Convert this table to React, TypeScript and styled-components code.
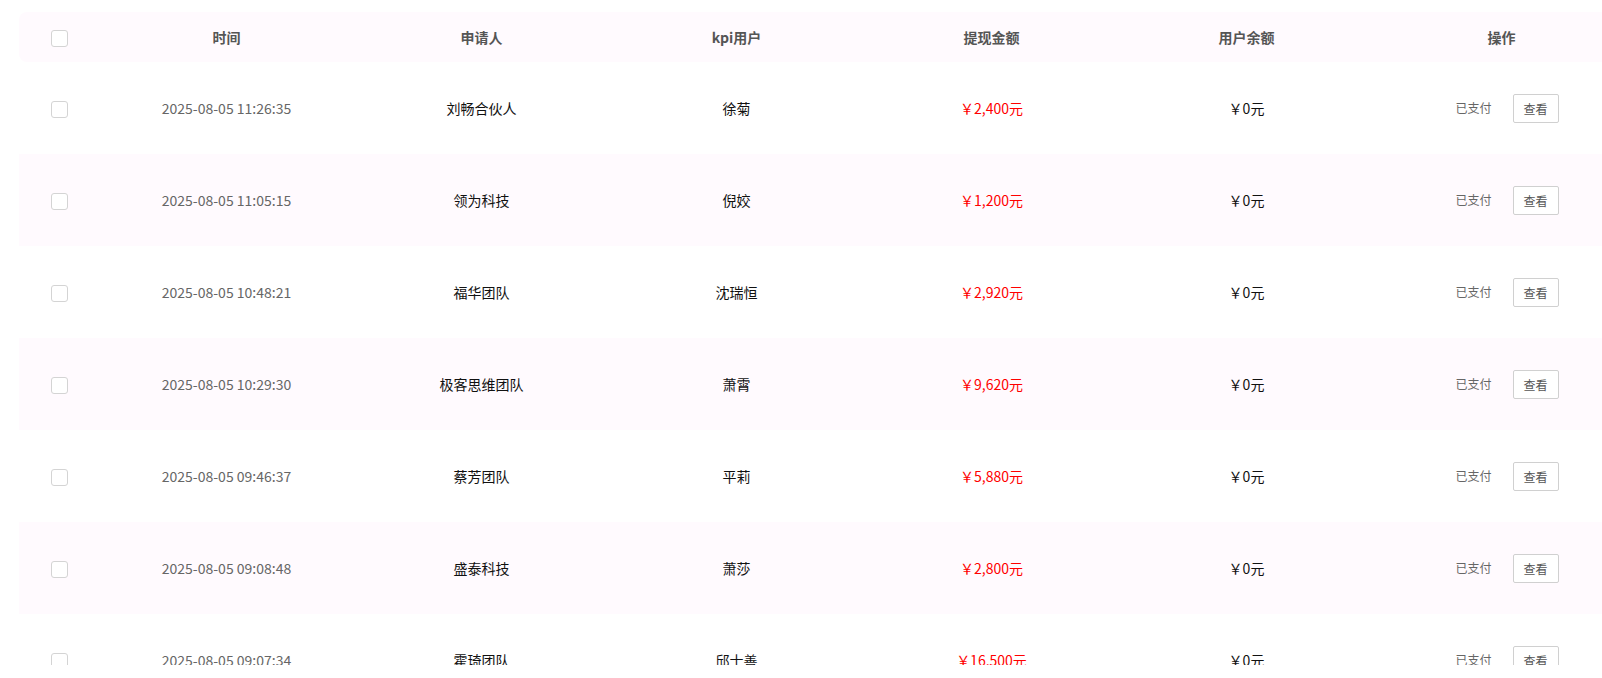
import React from "react";
import styled, { createGlobalStyle } from "styled-components";

const GlobalStyle = createGlobalStyle`
  html, body {
    margin: 0;
    padding: 0;
    background: #ffffff;
    font-family: "Noto Sans CJK SC", "Noto Sans", sans-serif;
  }
`;

const Page = styled.div`
  width: 1602px;
  height: 678px;
  overflow: hidden;
  background: #fff;
`;

const Viewport = styled.div`
  height: 665px;
  overflow: hidden;
  padding: 12px 0 0 19px;
  box-sizing: border-box;
`;

const Table = styled.div`
  width: 1610px;
  display: flex;
  flex-direction: column;
`;

const cols = "80px repeat(6, 255px)";

const HeaderRow = styled.div`
  display: grid;
  grid-template-columns: ${cols};
  height: 50px;
  background: #fffafe;
  border-radius: 8px 0 0 8px;
`;

const Row = styled.div<{ $striped: boolean }>`
  display: grid;
  grid-template-columns: ${cols};
  height: 92px;
  background: ${(p) => (p.$striped ? "#fffafe" : "#ffffff")};
`;

const Cell = styled.div`
  display: flex;
  align-items: center;
  justify-content: center;
  font-size: 14px;
  line-height: 20px;
  white-space: nowrap;
`;

const HeadCell = styled(Cell)`
  font-weight: 700;
  color: #555555;
`;

const BodyCell = styled(Cell)<{ $tone?: "gray" | "dark" | "red" }>`
  color: ${(p) =>
    p.$tone === "gray" ? "#666666" : p.$tone === "red" ? "#ff0000" : "#111111"};
`;

const ActionCell = styled(Cell)`
  padding-left: 11px;
`;

const Check = styled.span`
  display: block;
  width: 17px;
  height: 17px;
  box-sizing: border-box;
  border: 1px solid #d4d4d4;
  border-radius: 3px;
  background: #fff;
  margin-top: 3px;
`;

const Status = styled.span`
  font-size: 12px;
  color: #666666;
  margin-right: 21px;
`;

const ViewButton = styled.button`
  width: 46px;
  height: 29px;
  box-sizing: border-box;
  border: 1px solid #d0d0d0;
  border-radius: 2px;
  background: #ffffff;
  font-family: "Noto Sans CJK SC", "Noto Sans", sans-serif;
  font-size: 12px;
  color: #555555;
  padding: 0;
  cursor: pointer;
`;

type Item = {
  time: string;
  applicant: string;
  kpi: string;
  amount: string;
  balance: string;
};

const rows: Item[] = [
  { time: "2025-08-05 11:26:35", applicant: "刘畅合伙人", kpi: "徐菊", amount: "￥2,400元", balance: "￥0元" },
  { time: "2025-08-05 11:05:15", applicant: "领为科技", kpi: "倪姣", amount: "￥1,200元", balance: "￥0元" },
  { time: "2025-08-05 10:48:21", applicant: "福华团队", kpi: "沈瑞恒", amount: "￥2,920元", balance: "￥0元" },
  { time: "2025-08-05 10:29:30", applicant: "极客思维团队", kpi: "萧霄", amount: "￥9,620元", balance: "￥0元" },
  { time: "2025-08-05 09:46:37", applicant: "蔡芳团队", kpi: "平莉", amount: "￥5,880元", balance: "￥0元" },
  { time: "2025-08-05 09:08:48", applicant: "盛泰科技", kpi: "萧莎", amount: "￥2,800元", balance: "￥0元" },
  { time: "2025-08-05 09:07:34", applicant: "霍琦团队", kpi: "邱士善", amount: "￥16,500元", balance: "￥0元" },
];

export default function App() {
  return (
    <Page>
      <GlobalStyle />
      <Viewport>
        <Table>
          <HeaderRow>
            <HeadCell>
              <Check />
            </HeadCell>
            <HeadCell>时间</HeadCell>
            <HeadCell>申请人</HeadCell>
            <HeadCell>kpi用户</HeadCell>
            <HeadCell>提现金额</HeadCell>
            <HeadCell>用户余额</HeadCell>
            <HeadCell>操作</HeadCell>
          </HeaderRow>
          {rows.map((r, i) => (
            <Row key={r.time} $striped={i % 2 === 1}>
              <BodyCell>
                <Check />
              </BodyCell>
              <BodyCell $tone="gray">{r.time}</BodyCell>
              <BodyCell>{r.applicant}</BodyCell>
              <BodyCell>{r.kpi}</BodyCell>
              <BodyCell $tone="red">{r.amount}</BodyCell>
              <BodyCell>{r.balance}</BodyCell>
              <ActionCell>
                <Status>已支付</Status>
                <ViewButton>查看</ViewButton>
              </ActionCell>
            </Row>
          ))}
        </Table>
      </Viewport>
    </Page>
  );
}
